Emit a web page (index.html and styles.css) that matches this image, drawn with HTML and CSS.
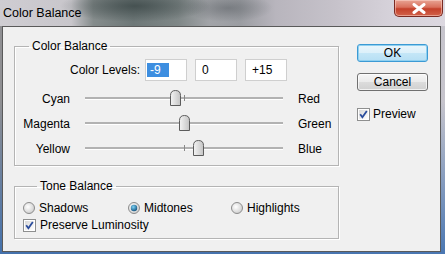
FILE: index.html
```html
<!DOCTYPE html>
<html>
<head>
<meta charset="utf-8">
<link rel="stylesheet" href="styles.css">
</head>
<body>
<div class="window">
  <div class="titlebar">
    <span class="title">Color Balance</span>
    <button class="close" aria-label="Close">
      <svg width="14" height="11" viewBox="0 0 14 11"><path d="M2 1.5 L12 9.5 M12 1.5 L2 9.5" stroke="#fff" stroke-width="3" stroke-linecap="round"/></svg>
    </button>
  </div>
  <div class="client">
    <div class="main">
      <fieldset class="group cb">
        <legend>Color Balance</legend>
        <div class="levels">
          <span class="lvl-label">Color Levels:</span>
          <span class="field"><span class="sel">-9</span></span>
          <span class="field">0</span>
          <span class="field">+15</span>
        </div>
        <div class="srow">
          <span class="sleft">Cyan</span>
          <div class="track"><span class="tick"></span><span class="thumb" style="left:84.6px"><svg width="11" height="16" viewBox="0 0 11 16"><defs><linearGradient id="tg1" x1="0" y1="0" x2="1" y2="0"><stop offset="0" stop-color="#f4f4f4"/><stop offset="1" stop-color="#c4c4c4"/></linearGradient></defs><path d="M0.5 15.5 V5.5 Q0.5 0.5 5.5 0.5 Q10.5 0.5 10.5 5.5 V15.5 Z" fill="url(#tg1)" stroke="#5c5c5c"/></svg></span></div>
          <span class="sright">Red</span>
        </div>
        <div class="srow">
          <span class="sleft">Magenta</span>
          <div class="track"><span class="tick"></span><span class="thumb" style="left:93.5px"><svg width="11" height="16" viewBox="0 0 11 16"><path d="M0.5 15.5 V5.5 Q0.5 0.5 5.5 0.5 Q10.5 0.5 10.5 5.5 V15.5 Z" fill="url(#tg1)" stroke="#5c5c5c"/></svg></span></div>
          <span class="sright">Green</span>
        </div>
        <div class="srow">
          <span class="sleft">Yellow</span>
          <div class="track"><span class="tick"></span><span class="thumb" style="left:108.4px"><svg width="11" height="16" viewBox="0 0 11 16"><path d="M0.5 15.5 V5.5 Q0.5 0.5 5.5 0.5 Q10.5 0.5 10.5 5.5 V15.5 Z" fill="url(#tg1)" stroke="#5c5c5c"/></svg></span></div>
          <span class="sright">Blue</span>
        </div>
      </fieldset>
      <fieldset class="group tone">
        <legend>Tone Balance</legend>
        <div class="radios">
          <label class="opt"><svg class="radio" width="12" height="12" viewBox="0 0 12 12"><defs><radialGradient id="rg" cx="0.4" cy="0.4" r="0.7"><stop offset="0" stop-color="#ffffff"/><stop offset="1" stop-color="#c9c9c9"/></radialGradient><radialGradient id="rd" cx="0.4" cy="0.35" r="0.7"><stop offset="0" stop-color="#7fd3f5"/><stop offset="1" stop-color="#0f4f7c"/></radialGradient></defs><circle cx="6" cy="6" r="5.5" fill="url(#rg)" stroke="#8c8c8c"/></svg>Shadows</label>
          <label class="opt"><svg class="radio" width="12" height="12" viewBox="0 0 12 12"><circle cx="6" cy="6" r="5.5" fill="url(#rg)" stroke="#8c8c8c"/><circle cx="6" cy="6" r="3.2" fill="url(#rd)"/></svg>Midtones</label>
          <label class="opt"><svg class="radio" width="12" height="12" viewBox="0 0 12 12"><circle cx="6" cy="6" r="5.5" fill="url(#rg)" stroke="#8c8c8c"/></svg>Highlights</label>
        </div>
        <label class="check lum"><svg class="cbox" width="13" height="13" viewBox="0 0 13 13"><defs><linearGradient id="cg" x1="0" y1="0" x2="1" y2="1"><stop offset="0" stop-color="#d8d8d8"/><stop offset="1" stop-color="#ffffff"/></linearGradient></defs><rect x="0.5" y="0.5" width="12" height="12" fill="#fff" stroke="#8e8f8f"/><rect x="2" y="2" width="9" height="9" fill="url(#cg)"/><path d="M3.2 6.3 L5.4 9.3 L9.8 3" fill="none" stroke="#2a4c9c" stroke-width="1.8"/></svg>Preserve Luminosity</label>
      </fieldset>
    </div>
    <div class="side">
      <button class="btn ok">OK</button>
      <button class="btn">Cancel</button>
      <label class="check preview"><svg class="cbox" width="13" height="13" viewBox="0 0 13 13"><rect x="0.5" y="0.5" width="12" height="12" fill="#fff" stroke="#8e8f8f"/><rect x="2" y="2" width="9" height="9" fill="url(#cg)"/><path d="M3.2 6.3 L5.4 9.3 L9.8 3" fill="none" stroke="#2a4c9c" stroke-width="1.8"/></svg>Preview</label>
    </div>
  </div>
</div>
</body>
</html>
```
FILE: styles.css
```css
html, body {
  margin: 0;
  padding: 0;
}
body {
  width: 445px;
  height: 254px;
  overflow: hidden;
  font-family: "Liberation Sans", Arial, sans-serif;
  font-size: 12px;
  color: #000;
  background:
    linear-gradient(180deg, rgba(200,198,206,0) 0%, rgba(200,198,206,0) 40%, rgba(60,110,175,0.9) 100%),
    linear-gradient(90deg, #8f8f92 0%, #9a9a9e 50%, #c6c4cc 100%);
}
.window {
  width: 445px;
  height: 254px;
  display: flex;
  flex-direction: column;
}
.titlebar {
  height: 26px;
  flex: none;
  display: flex;
  justify-content: space-between;
  align-items: flex-start;
  padding-left: 3px;
  background:
    radial-gradient(ellipse 75px 16px at 135px 6px, rgba(60,72,72,0.8), rgba(60,72,72,0) 100%),
    radial-gradient(ellipse 45px 14px at 228px 8px, rgba(90,95,100,0.55), rgba(90,95,100,0) 100%),
    linear-gradient(90deg, #cfcdd2 0%, #c8c6cb 16%, #858c8c 21%, #6e7878 30%, #7f8787 40%, #a2a4a8 47%, #9b9da2 54%, #b8b5bd 62%, #c6c2ca 75%, #d6d2da 88%, #dcd8e0 100%);
}
.title {
  line-height: 26px;
  font-size: 12.5px;
  color: #000;
}
.close {
  margin: 0 2px 0 0;
  width: 49px;
  height: 17px;
  border: 1px solid #7a2a22;
  border-top: none;
  border-radius: 0 0 5px 5px;
  background: linear-gradient(180deg, #e8a494 0%, #d9705c 45%, #c4402a 55%, #d2624a 100%);
  display: flex;
  align-items: center;
  justify-content: center;
  padding: 0;
  box-shadow: inset 0 0 0 1px rgba(255,220,210,0.5);
}
.client {
  flex: 1;
  margin: 0 4px 2px 2px;
  border: 1px solid #5a5a5a;
  background: #f0f0f0;
  display: flex;
}
.main {
  padding: 12px 0 0 11px;
  width: 325px;
  flex: none;
}
.group {
  margin: 0;
  padding: 0;
  border: 1px solid #b4b4b4;
  box-shadow: 1px 1px 0 #fff, inset 1px 1px 0 #fff;
  min-width: 0;
}
.group legend {
  margin-left: 14px;
  padding: 0 3px;
  line-height: 14px;
  font-size: 12px;
}
.cb {
  padding-bottom: 4px;
}
.levels {
  margin-top: 6px;
  display: flex;
  align-items: center;
  gap: 8px;
}
.lvl-label {
  width: 125px;
  margin-right: -3px;
  text-align: right;
}
.field {
  width: 42px;
  height: 22px;
  box-sizing: border-box;
  border: 1px solid #cfcfcf;
  background: #fff;
  display: flex;
  align-items: center;
  padding-left: 6px;
}
.field .sel {
  margin-left: -5px;
  background: #3d8ee0;
  color: #fff;
  padding: 0 8px 0 3px;
  line-height: 14px;
}
.srow {
  height: 25px;
  display: flex;
  align-items: center;
}
.levels + .srow {
  margin-top: 5px;
}
.sleft {
  width: 55px;
  text-align: right;
}
.track {
  position: relative;
  width: 198px;
  height: 2px;
  margin: 0 15px;
  background: #b2b2b2;
  border-bottom: 1px solid #fff;
}
.tick {
  position: absolute;
  left: 99px;
  top: -2px;
  width: 1px;
  height: 6px;
  background: #8a8a8a;
}
.thumb {
  position: absolute;
  top: -7px;
  width: 11px;
  height: 16px;
  display: block;
}
.thumb svg {
  display: block;
}
.tone {
  margin-top: 13px;
  padding: 7px 0 5px 8px;
}
.radios {
  display: grid;
  grid-template-columns: 105px 103px auto;
  height: 16px;
  align-items: center;
}
.opt, .check {
  display: flex;
  align-items: center;
  gap: 4px;
  height: 16px;
}
.lum {
  margin-top: 1px;
}
.radio, .cbox {
  display: block;
  flex: none;
}
.side {
  margin-left: 18px;
  padding-top: 17px;
  display: flex;
  flex-direction: column;
  align-items: flex-start;
}
.btn {
  width: 71px;
  height: 18px;
  padding: 0;
  font-family: "Liberation Sans", Arial, sans-serif;
  font-size: 12px;
  color: #000;
  border: 1px solid #707070;
  border-radius: 3px;
  background: linear-gradient(180deg, #f6f6f6 0%, #ebebeb 48%, #dcdcdc 52%, #d0d0d0 100%);
  box-shadow: inset 0 0 0 1px rgba(255,255,255,0.7);
}
.btn.ok {
  border-color: #3c9ad4;
  background: linear-gradient(180deg, #eaf6fc 0%, #dcf0fa 48%, #c4e6f7 52%, #b6dff4 100%);
  box-shadow: inset 0 0 0 1px #8fd0f0;
}
.btn + .btn {
  margin-top: 11px;
}
.preview {
  margin-top: 15px;
  gap: 3px;
}
```
